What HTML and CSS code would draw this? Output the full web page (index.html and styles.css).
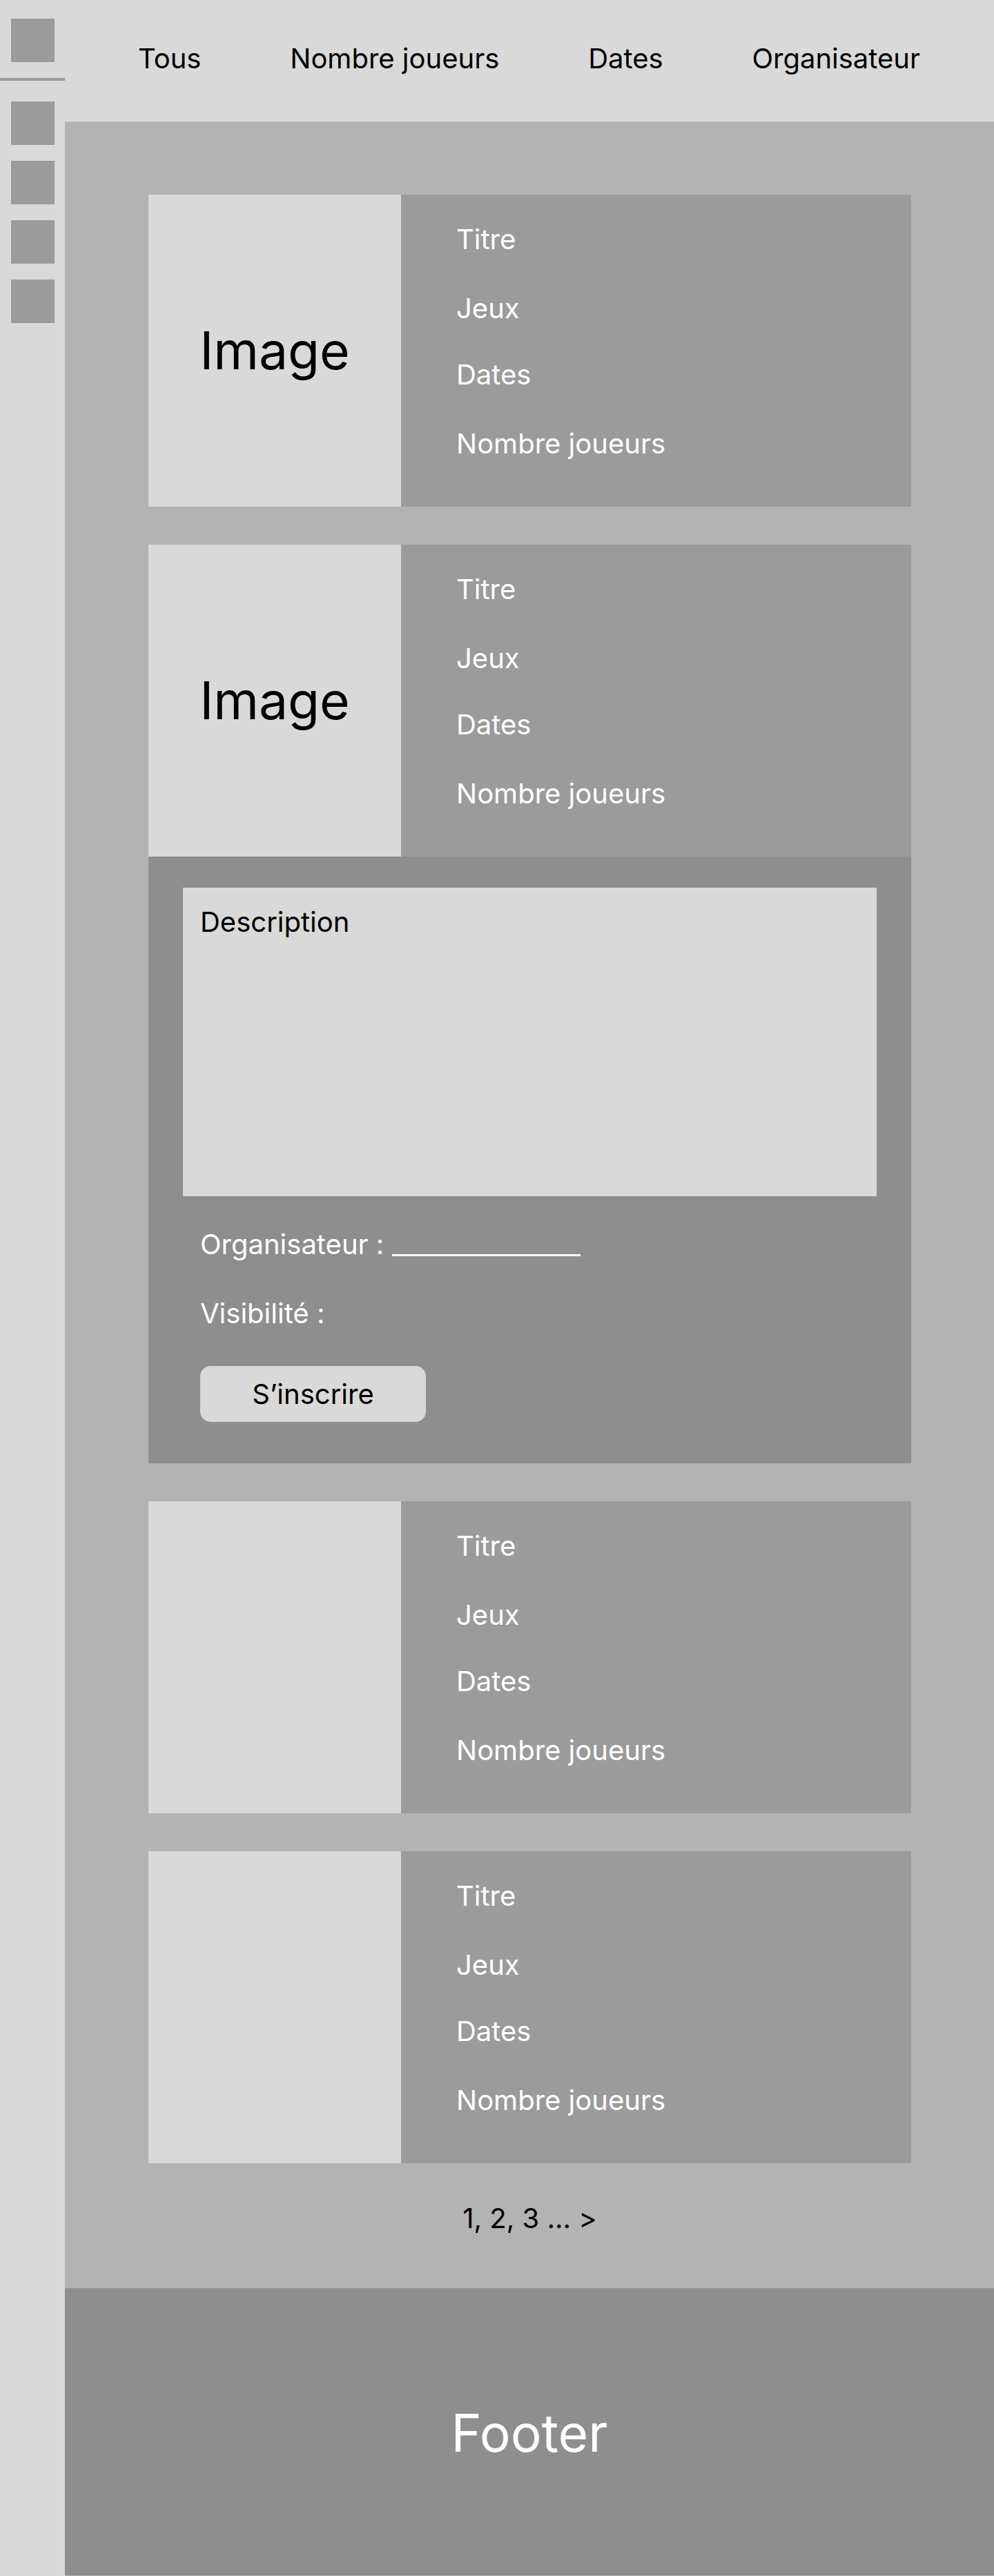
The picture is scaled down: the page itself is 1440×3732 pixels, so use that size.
FILE: index.html
```html
<!DOCTYPE html>
<html lang="fr">
<head>
  <meta charset="utf-8">
  <meta name="viewport" content="width=device-width, initial-scale=1">
  <title>Parties</title>
  <link rel="stylesheet" href="styles.css">
</head>
<body>
  <aside class="sidebar">
    <a class="tile" href="#" aria-label="Accueil"></a>
    <hr class="sidebar-line">
    <nav class="tiles" aria-label="Raccourcis">
      <a class="tile" href="#" aria-label="Raccourci 1"></a>
      <a class="tile" href="#" aria-label="Raccourci 2"></a>
      <a class="tile" href="#" aria-label="Raccourci 3"></a>
      <a class="tile" href="#" aria-label="Raccourci 4"></a>
    </nav>
  </aside>

  <div class="page">
    <header>
      <nav class="filters" aria-label="Filtres">
        <a href="#">Tous</a>
        <a href="#">Nombre joueurs</a>
        <a href="#">Dates</a>
        <a href="#">Organisateur</a>
      </nav>
    </header>

    <main>
      <div class="cards">
        <article>
          <div class="card">
            <div class="card-image">Image</div>
            <div class="card-info">
              <div class="info-group"><p>Titre</p><p>Jeux</p></div>
              <div class="info-group"><p>Dates</p><p>Nombre joueurs</p></div>
            </div>
          </div>
        </article>

        <article>
          <div class="card">
            <div class="card-image">Image</div>
            <div class="card-info">
              <div class="info-group"><p>Titre</p><p>Jeux</p></div>
              <div class="info-group"><p>Dates</p><p>Nombre joueurs</p></div>
            </div>
          </div>
          <div class="details">
            <div class="description"><p>Description</p></div>
            <form class="signup">
              <div class="field">
                <label for="organisateur">Organisateur :</label>
                <input id="organisateur" type="text">
              </div>
              <p>Visibilité :</p>
              <button type="button">S’inscrire</button>
            </form>
          </div>
        </article>

        <article>
          <div class="card">
            <div class="card-image"></div>
            <div class="card-info">
              <div class="info-group"><p>Titre</p><p>Jeux</p></div>
              <div class="info-group"><p>Dates</p><p>Nombre joueurs</p></div>
            </div>
          </div>
        </article>

        <article>
          <div class="card">
            <div class="card-image"></div>
            <div class="card-info">
              <div class="info-group"><p>Titre</p><p>Jeux</p></div>
              <div class="info-group"><p>Dates</p><p>Nombre joueurs</p></div>
            </div>
          </div>
        </article>
      </div>

      <nav class="pagination" aria-label="Pagination">
        <a href="#">1</a>, <a href="#">2</a>, <a href="#">3</a> ... <a href="#" aria-label="Page suivante">&gt;</a>
      </nav>
    </main>

    <footer>Footer</footer>
  </div>
</body>
</html>
```

FILE: styles.css
```css
:root {
  --light: #d9d9d9;
  --page: #b3b3b3;
  --card: #9b9b9b;
  --dark: #8e8e8e;
}

* {
  box-sizing: border-box;
}

body {
  display: flex;
  min-height: 100vh;
  margin: 0;
  background: var(--page);
  color: #000;
  font-family: Inter, "Liberation Sans", sans-serif;
  font-size: 40px;
  line-height: 48px;
}

p {
  margin: 0;
}

a {
  color: inherit;
  text-decoration: none;
}

/* Sidebar */

.sidebar {
  flex: 0 0 94px;
  padding-top: 27px;
  background: var(--light);
}

.tile {
  display: block;
  width: 63px;
  height: 63px;
  margin-left: 16px;
  background: var(--card);
}

.sidebar-line {
  height: 4px;
  margin: 23px 0 30px;
  border: 0;
  background: var(--card);
}

.tiles {
  display: flex;
  flex-direction: column;
  gap: 23px;
}

/* Header */

.page {
  flex: 1;
  min-width: 0;
}

header {
  padding: 61px 107px 66px 106px;
  border-bottom: 1px solid #e0e0e0;
  background: var(--light);
}

.filters {
  display: flex;
  justify-content: space-between;
}

/* Cards */

main {
  padding: 106px 120px 77px 121px;
}

.cards {
  display: flex;
  flex-direction: column;
  gap: 55px;
}

.card {
  display: grid;
  grid-template-columns: 366px 1fr;
  min-height: 452px;
  background: var(--card);
  color: #fff;
}

.card-image {
  display: flex;
  align-items: center;
  justify-content: center;
  background: var(--light);
  color: #000;
  font-size: 75px;
  line-height: 92px;
}

.card-info {
  display: flex;
  flex-direction: column;
  gap: 48px;
  padding: 41px 80px;
}

.info-group {
  display: flex;
  flex-direction: column;
  gap: 52px;
}

/* Expanded card */

.details {
  padding: 45px 50px 60px;
  background: var(--dark);
  color: #fff;
}

.description {
  min-height: 447px;
  padding: 26px 25px;
  background: var(--light);
  color: #000;
}

.signup {
  display: flex;
  flex-direction: column;
  align-items: flex-start;
  gap: 52px;
  padding: 46px 25px 0;
}

.field {
  display: flex;
  gap: 12px;
}

.field input {
  width: 273px;
  height: 41px;
  padding: 0;
  border: 0;
  border-bottom: 3px solid #fff;
  background: none;
  color: inherit;
  font: inherit;
}

button {
  width: 327px;
  height: 81px;
  padding: 0;
  border: 0;
  border-radius: 15px;
  background: var(--light);
  color: #000;
  font: inherit;
}

/* Pagination and footer */

.pagination {
  margin-top: 56px;
  text-align: center;
}

footer {
  padding: 164px 0 160px;
  background: var(--dark);
  color: #fff;
  font-size: 75px;
  line-height: 92px;
  text-align: center;
}
```
